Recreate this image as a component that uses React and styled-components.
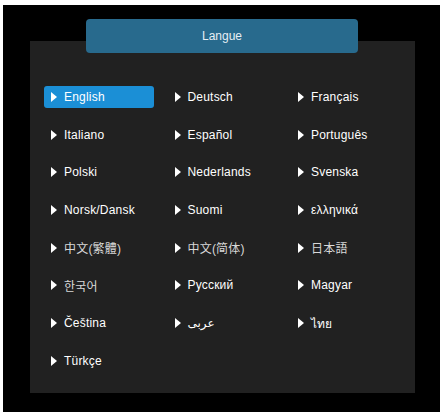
import React from "react";
import styled, { createGlobalStyle } from "styled-components";

const Global = createGlobalStyle`
  html, body { margin: 0; padding: 0; background: #000000; overflow: hidden; }
  body { font-family: "Liberation Sans", Arial, "Noto Sans CJK SC", sans-serif; }
`;

const Frame = styled.div`
  width: 440px;
  height: 412px;
  background: #000000;
  border-top: 5px solid #ffffff;
  border-left: 3px solid #ffffff;
  padding-top: 14px;
  box-sizing: border-box;
  display: flex;
  flex-direction: column;
`;

const Tab = styled.div`
  position: relative;
  z-index: 1;
  align-self: flex-start;
  margin-left: 83px;
  width: 272px;
  height: 34px;
  border-radius: 4px;
  background: #286a8d;
  color: #e6eef4;
  font-size: 12px;
  display: flex;
  align-items: center;
  justify-content: center;
`;

const Panel = styled.div`
  margin: -12px 0 0 27px;
  width: 385px;
  height: 352px;
  background: #212121;
  box-sizing: border-box;
  padding: 45px 0 0 14px;
  display: grid;
  grid-template-columns: repeat(3, 123.5px);
  grid-auto-rows: 22px;
  row-gap: 15.7px;
  align-content: start;
`;

const Item = styled.div`
  width: 110px;
  height: 22px;
  box-sizing: border-box;
  padding-left: 7px;
  display: flex;
  align-items: center;
  gap: 7px;
  border-radius: 3px;
  background: ${(p) => (p.$active ? "#1b8fd6" : "transparent")};
  color: #ffffff;
  font-size: 12px;
  letter-spacing: 0.2px;
  white-space: nowrap;
`;

const Arrow = styled.span`
  width: 0;
  height: 0;
  border-top: 5px solid transparent;
  border-bottom: 5px solid transparent;
  border-left: 6px solid #ffffff;
  flex: none;
`;

const Label = styled.span`
  font-family: ${(p) =>
    p.$cjk
      ? `"Liberation Sans", "Noto Sans CJK ${p.$cjk}", sans-serif`
      : `"Liberation Sans", Arial, "DejaVu Sans", sans-serif`};
  color: ${(p) => (p.$cjk ? "#d8d8d8" : "#ffffff")};
`;

const langs = [
  { t: "English", active: true },
  { t: "Deutsch" },
  { t: "Français" },
  { t: "Italiano" },
  { t: "Español" },
  { t: "Português" },
  { t: "Polski" },
  { t: "Nederlands" },
  { t: "Svenska" },
  { t: "Norsk/Dansk" },
  { t: "Suomi" },
  { t: "ελληνικά" },
  { t: "中文(繁體)", cjk: "TC" },
  { t: "中文(简体)", cjk: "SC" },
  { t: "日本語", cjk: "JP" },
  { t: "한국어", cjk: "KR" },
  { t: "Русский" },
  { t: "Magyar" },
  { t: "Čeština" },
  { t: "عربى" },
  { t: "ไทย" },
  { t: "Türkçe" },
];

export default function App() {
  return (
    <>
      <Global />
      <Frame>
        <Tab>Langue</Tab>
        <Panel>
          {langs.map((l) => (
            <Item key={l.t} $active={l.active}>
              <Arrow />
              <Label $cjk={l.cjk}>{l.t}</Label>
            </Item>
          ))}
        </Panel>
      </Frame>
    </>
  );
}
